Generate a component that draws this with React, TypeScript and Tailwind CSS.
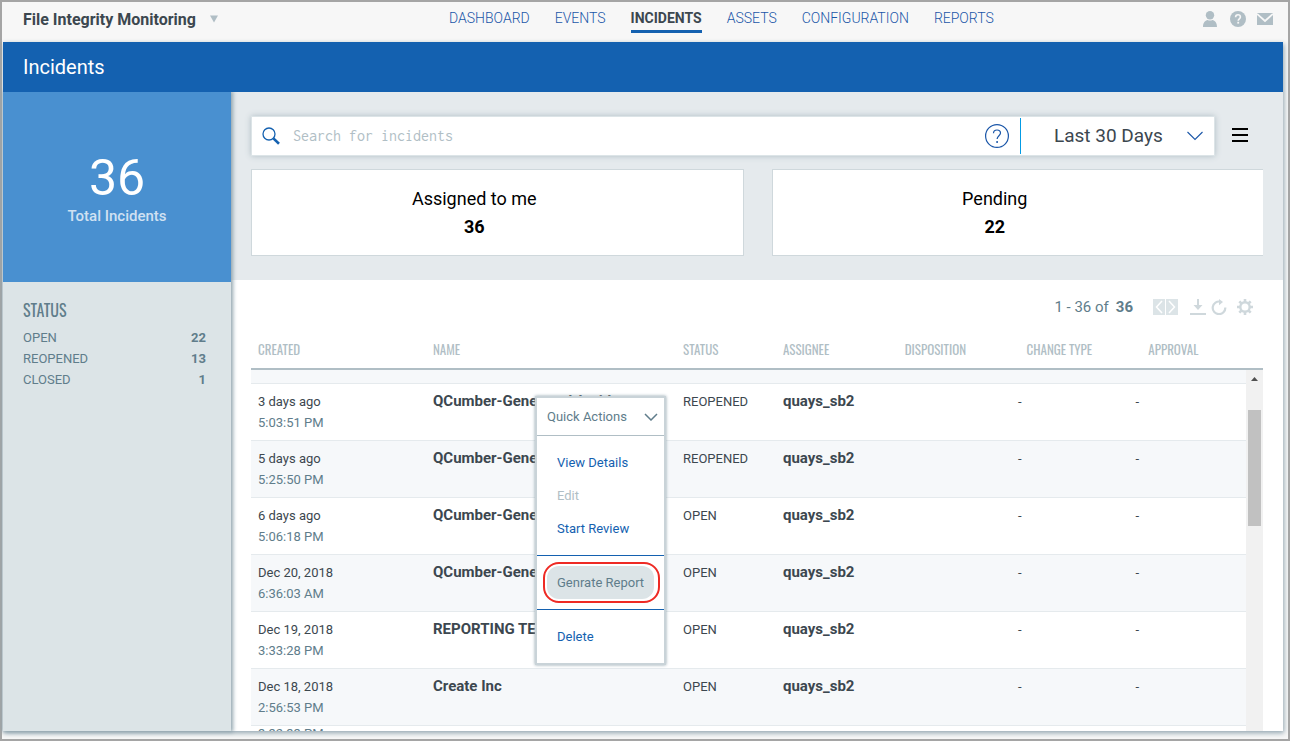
import React, { useState } from 'react';

const navItems = ['DASHBOARD', 'EVENTS', 'INCIDENTS', 'ASSETS', 'CONFIGURATION', 'REPORTS'];

const statuses = [
  { label: 'OPEN', count: 22 },
  { label: 'REOPENED', count: 13 },
  { label: 'CLOSED', count: 1 },
];

const columns = ['CREATED', 'NAME', 'STATUS', 'ASSIGNEE', 'DISPOSITION', 'CHANGE TYPE', 'APPROVAL'];

const incidents = [
  { date: '3 days ago', time: '5:03:51 PM', name: 'QCumber-Generated-Incid', status: 'REOPENED' },
  { date: '5 days ago', time: '5:25:50 PM', name: 'QCumber-Gene', status: 'REOPENED' },
  { date: '6 days ago', time: '5:06:18 PM', name: 'QCumber-Gene', status: 'OPEN' },
  { date: 'Dec 20, 2018', time: '6:36:03 AM', name: 'QCumber-Gene', status: 'OPEN' },
  { date: 'Dec 19, 2018', time: '3:33:28 PM', name: 'REPORTING TE', status: 'OPEN' },
  { date: 'Dec 18, 2018', time: '2:56:53 PM', name: 'Create Inc', status: 'OPEN' },
];

const condensed = "font-['Oswald','Roboto_Condensed','Liberation_Sans_Narrow','Roboto',sans-serif]";

const Columns: React.FC = () => (
  <colgroup>
    <col className="w-[175px]" />
    <col className="w-[250px]" />
    <col className="w-[100px]" />
    <col />
    <col />
    <col />
    <col />
  </colgroup>
);

const Header: React.FC = () => (
  <header className="flex h-10 shrink-0 items-start pr-[15px] pl-[21px]">
    <button type="button" className="flex w-[426px] shrink-0 items-center gap-[14px] pt-2 text-base leading-5 font-bold text-[#3c474f]">
      File Integrity Monitoring
      <svg width="8" height="12" viewBox="0 0 8 12" fill="#b0bec5" aria-hidden="true">
        <path d="M0 1.500h8L4 8.500z" />
      </svg>
    </button>
    <nav className="flex gap-[25px] pt-[6px] text-sm leading-5 font-light text-[#1a56a8]">
      {navItems.map((item) => (
        <a
          key={item}
          href="#"
          className={
            item === 'INCIDENTS'
              ? 'border-b-3 border-[#1461b0] pb-[2px] font-bold text-[#3c474f]'
              : 'pb-[2px]'
          }
        >
          {item}
        </a>
      ))}
    </nav>
    <div className="ml-auto flex gap-[11px] pt-[9px] text-[#b0bec5]">
      <button type="button" aria-label="Account">
        <svg width="16" height="16" viewBox="0 0 16 16" fill="currentColor">
          <circle cx="7" cy="4.200" r="4.200" />
          <path d="M0 16c0-4.400 2.200-6.600 4.600-7 1.500.8 3.300.8 4.800 0 2.400.4 4.600 2.600 4.600 7z" />
        </svg>
      </button>
      <button type="button" aria-label="Help">
        <svg width="16" height="16" viewBox="0 0 16 16">
          <circle cx="8" cy="8" r="8" fill="currentColor" />
          <path d="M5.600 6.200c0-1.500 1-2.400 2.400-2.400s2.400.9 2.400 2.200c0 1.700-2.200 1.900-2.200 3.700" fill="none" stroke="#f7f7f7" strokeWidth="1.600" />
          <rect x="7.300" y="10.800" width="1.800" height="1.800" fill="#f7f7f7" />
        </svg>
      </button>
      <button type="button" aria-label="Messages">
        <svg width="16" height="16" viewBox="0 0 16 16">
          <rect y="2" width="16" height="12" fill="currentColor" />
          <path d="M0 2.800 8 10l8-7.200" fill="none" stroke="#f7f7f7" strokeWidth="1.800" />
        </svg>
      </button>
    </div>
  </header>
);

const Sidebar: React.FC = () => (
  <aside className="z-10 flex w-[228px] shrink-0 flex-col bg-[#dce4e7] shadow-[1px_0_4px_1px_#90a4ae]">
    <div className="flex h-[190px] flex-col items-center bg-[#4990d0] pt-[58px]">
      <div className="text-[50px] leading-[56px] text-white">36</div>
      <div className="text-[15px] leading-5 font-medium text-[#d0e1f2]">Total Incidents</div>
    </div>
    <div className="px-5 pt-4 text-[13px] text-[#607d8b]">
      <h2 className={`${condensed} text-base leading-6 font-normal`}>STATUS</h2>
      <ul className="pt-[5px] pr-[5px] leading-[21px]">
        {statuses.map((s) => (
          <li key={s.label} className="flex justify-between">
            <span>{s.label}</span>
            <span className="font-bold">{s.count}</span>
          </li>
        ))}
      </ul>
    </div>
  </aside>
);

const SearchBar: React.FC = () => {
  const [query, setQuery] = useState('');

  return (
    <div className="flex items-center pr-[14px]">
      <div className="flex h-10 flex-1 items-center border border-[#dce4e7] bg-white shadow-[0_0_6px_#b0bec5]">
        <svg className="ml-[10px]" width="18" height="18" viewBox="0 0 18 18" fill="none" stroke="#1461b0" aria-hidden="true">
          <circle cx="7" cy="7" r="6" strokeWidth="1.300" />
          <path d="m11.400 11.400 5.600 5.400" strokeWidth="2.600" />
        </svg>
        <input
          type="text"
          aria-label="Search for incidents"
          placeholder="Search for incidents"
          value={query}
          onChange={(e) => setQuery(e.target.value)}
          className="ml-[13px] min-w-0 flex-1 font-['Inconsolata','Liberation_Mono',monospace] text-base outline-none placeholder:text-[#b0bec5]"
        />
        <button type="button" aria-label="Search help" className="mr-[11px]">
          <svg width="24" height="24" viewBox="0 0 24 24" fill="none" stroke="#1a56a8">
            <circle cx="12" cy="12" r="11.400" strokeWidth="1.200" />
            <path d="M8.500 9.300c0-2 1.400-3.300 3.500-3.300s3.500 1.200 3.500 3.100c0 2.600-3.400 2.700-3.400 6" strokeWidth="1.200" />
            <path d="M12.100 17v2" strokeWidth="1.500" />
          </svg>
        </button>
        <div className="flex h-9 w-[194px] items-center border-l border-[#039be5] pr-[11px] pl-[33px]">
          <select aria-label="Time range" className="flex-1 appearance-none text-[19px] text-[#3c474f] outline-none">
            <option>Last 30 Days</option>
          </select>
          <svg width="16" height="10" viewBox="0 0 16 10" fill="none" stroke="#1a56a8" aria-hidden="true">
            <path d="m.5 1 7.500 7.500L15.500 1" strokeWidth="1.100" />
          </svg>
        </div>
      </div>
      <button type="button" aria-label="Menu" className="ml-4">
        <svg width="18" height="16" viewBox="0 0 18 16" fill="#000">
          <path d="M1 0h16v2H1zM1 6h16v2H1zM1 12h16v2H1z" />
        </svg>
      </button>
    </div>
  );
};

const Summary: React.FC<{ label: string; count: number }> = ({ label, count }) => (
  <div className="h-[87px] flex-1 border border-[#cfd8dc] bg-white pt-[15px] pr-[46px] text-center text-lg leading-7 text-black">
    <div>{label}</div>
    <div className="font-bold">{count}</div>
  </div>
);

const Toolbar: React.FC = () => (
  <div className="flex h-[54px] items-center justify-end pr-[10px] text-[15px] text-[#607d8b]">
    <span>1 - 36 of</span>
    <b className="ml-[7px]">36</b>
    <button type="button" aria-label="Previous page" className="ml-5 bg-[#dce4e7]">
      <svg width="12" height="16" viewBox="0 0 12 16" fill="none" stroke="#fff">
        <path d="M9 2 3.500 8 9 14" strokeWidth="1.500" />
      </svg>
    </button>
    <button type="button" aria-label="Next page" className="ml-px bg-[#dce4e7]">
      <svg width="12" height="16" viewBox="0 0 12 16" fill="none" stroke="#fff">
        <path d="M3 2l5.500 6L3 14" strokeWidth="1.500" />
      </svg>
    </button>
    <button type="button" aria-label="Download" className="ml-3">
      <svg width="16" height="16" viewBox="0 0 16 16" fill="#cfd8dc">
        <path d="M7 0h2v6h3.500L8 11 3.500 6H7zM0 14h16v2H0z" />
      </svg>
    </button>
    <button type="button" aria-label="Refresh" className="ml-[5px]">
      <svg width="16" height="16" viewBox="0 0 16 16">
        <path d="M9.500 2.700A6.300 6.300 0 1 0 14.300 8.500" fill="none" stroke="#cfd8dc" strokeWidth="2.200" />
        <path d="M8 0l4 3-4 3.200z" fill="#cfd8dc" />
      </svg>
    </button>
    <button type="button" aria-label="Settings" className="ml-[10px]">
      <svg width="16" height="16" viewBox="0 0 16 16" fill="none" stroke="#cfd8dc">
        <circle cx="8" cy="8" r="4.700" strokeWidth="2.400" />
        <path d="M8 0v3M8 13v3M0 8h3M13 8h3M2.300 2.300l2.200 2.200M11.500 11.500l2.200 2.200M2.300 13.700l2.200-2.200M11.500 4.500l2.200-2.200" strokeWidth="2.600" />
      </svg>
    </button>
  </div>
);

const QuickActions: React.FC = () => (
  <div className="absolute top-3 left-[109px] z-10 w-[131px] border-2 border-[#c9d3d8] bg-white text-[13px] font-normal text-[#1461b0] shadow-[0_0_3px_#90a4ae]">
    <button type="button" className="flex h-[38px] w-full items-center justify-between border-b border-[#b0bec5] pr-[6px] pl-[10px] text-[#607d8b]">
      Quick Actions
      <svg width="14" height="8" viewBox="0 0 14 8" fill="none" stroke="#607d8b" aria-hidden="true">
        <path d="m1 1 6 6 6-6" strokeWidth="1.500" />
      </svg>
    </button>
    <div className="flex flex-col items-start border-b border-[#1461b0] px-[10px] py-[10px]">
      <button type="button" className="h-[33px] px-[10px]">View Details</button>
      <button type="button" disabled className="h-[33px] px-[10px] text-[#b0bec5]">Edit</button>
      <button type="button" className="h-[33px] px-[10px]">Start Review</button>
    </div>
    <div className="relative border-b border-[#1461b0] px-[10px] py-[10px]">
      <button type="button" className="h-[33px] w-full rounded-xl bg-[#dce4e7] px-[10px] text-left whitespace-nowrap text-[#607d8b]">
        Genrate Report
      </button>
      <div className="pointer-events-none absolute inset-y-[6px] right-1 left-[6px] rounded-2xl border-2 border-[#ee2a24]" />
    </div>
    <div className="px-[10px] py-[10px]">
      <button type="button" className="h-[33px] px-[10px]">Delete</button>
    </div>
  </div>
);

const IncidentTable: React.FC = () => (
  <div className="flex min-h-0 flex-1 flex-col">
    <table className="w-full table-fixed border-b-2 border-[#b0bec5]">
      <Columns />
      <thead>
        <tr className="h-[35px] align-top">
          {columns.map((c) => (
            <th key={c} scope="col" className={`${condensed} px-[7px] pt-[5px] text-left text-[13px] leading-5 font-normal text-[#b0bec5]`}>
              {c}
            </th>
          ))}
        </tr>
      </thead>
    </table>
    <div className="flex min-h-0 flex-1">
      <div className="min-w-0 flex-1 overflow-hidden">
        <table className="w-full table-fixed border-separate border-spacing-0 text-[13px] text-[#3c474f]">
          <Columns />
          <tbody>
            {/* row scrolled under the header */}
            <tr className="h-[14px] bg-[#f6f8fa]">
              <td colSpan={7} className="border-b border-[#e5eaed]" />
            </tr>
            {incidents.map((incident, index) => (
              <tr key={incident.date} className="align-top leading-[21px] even:bg-white odd:bg-[#f6f8fa] [&>td]:border-b [&>td]:border-[#e5eaed] [&>td]:px-[7px] [&>td]:py-[7px]">
                <td>
                  {incident.date}
                  <div className="text-[#607d8b]">{incident.time}</div>
                </td>
                <td className="relative text-[15px] leading-5 font-bold">
                  {incident.name}
                  {index === 0 && <QuickActions />}
                </td>
                <td>{incident.status}</td>
                <td className="text-[15px] leading-5 font-bold">quays_sb2</td>
                <td />
                <td>-</td>
                <td>-</td>
              </tr>
            ))}
            <tr className="leading-4 text-[#607d8b]">
              <td className="px-[7px]">3:32:33 PM</td>
            </tr>
          </tbody>
        </table>
      </div>
      <div className="flex w-[17px] flex-col items-center bg-[#f1f1f1]">
        <svg width="17" height="17" viewBox="0 0 17 17" fill="#505050" aria-hidden="true">
          <path d="M5 11h7L8.500 7z" />
        </svg>
        <div className="mt-[23px] h-[116px] w-[13px] bg-[#c1c1c1]" />
      </div>
    </div>
  </div>
);

const App: React.FC = () => (
  <div className="flex h-screen flex-col border-2 border-[#a5a5a5] bg-[#f7f7f7] font-['Roboto',sans-serif]">
    <Header />
    <div className="mr-[5px] mb-2 ml-px flex min-h-0 flex-1 flex-col shadow-[1px_2px_5px_#90a4ae]">
      <div className="z-20 flex h-[50px] shrink-0 items-center bg-[#1461b0] px-5">
        <h1 className="text-xl text-white">Incidents</h1>
      </div>
      <div className="flex min-h-0 flex-1 bg-white">
        <Sidebar />
        <main className="flex min-w-0 flex-1 flex-col">
          <div className="h-[188px] bg-[#e5eaed] px-5 pt-6">
            <SearchBar />
            {/* last card runs off the edge by its border */}
            <div className="mt-[13px] overflow-hidden">
              <div className="-mr-px flex gap-7">
                <Summary label="Assigned to me" count={36} />
                <Summary label="Pending" count={22} />
              </div>
            </div>
          </div>
          <div className="flex min-h-0 flex-1 flex-col px-5">
            <Toolbar />
            <IncidentTable />
          </div>
        </main>
      </div>
    </div>
  </div>
);

export default App;
